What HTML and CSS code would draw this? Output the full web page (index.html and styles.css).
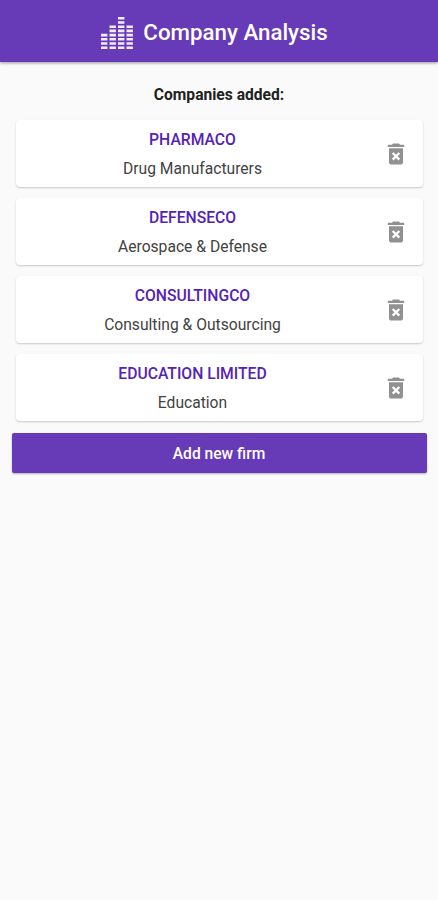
FILE: index.html
```html
<!DOCTYPE html>
<html lang="en">
<head>
  <meta charset="utf-8">
  <meta name="viewport" content="width=device-width, initial-scale=1">
  <title>Company Analysis</title>
  <link rel="stylesheet" href="styles.css">
</head>
<body>

  <!-- Shared icons -->
  <svg width="0" height="0" class="icon-defs">
    <symbol id="icon-delete" viewBox="0 0 24 24">
      <path fill-rule="evenodd" d="M6 19c0 1.1.9 2 2 2h8c1.1 0 2-.9 2-2V7H6v12zm2.46-7.12l1.41-1.41L12 12.59l2.12-2.12 1.41 1.41L13.41 14l2.12 2.12-1.41 1.41L12 15.41l-2.12 2.12-1.41-1.41L10.59 14l-2.13-2.12zM15.5 4l-1-1h-5l-1 1H5v2h14V4z"/>
    </symbol>
  </svg>

  <header class="toolbar">
    <svg class="logo" viewBox="0 0 32 33" aria-hidden="true">
      <path d="M3.2 33V17M11.7 33V8.4M20.2 33V0M28.7 33V8.4"/>
    </svg>
    <h1>Company Analysis</h1>
  </header>

  <main>
    <h2 class="list-title">Companies added:</h2>

    <div class="companies">
      <div class="card">
        <div class="info">
          <div class="name">PHARMACO</div>
          <div class="sector">Drug Manufacturers</div>
        </div>
        <button class="delete" aria-label="Delete"><svg><use href="#icon-delete"/></svg></button>
      </div>

      <div class="card">
        <div class="info">
          <div class="name">DEFENSECO</div>
          <div class="sector">Aerospace &amp; Defense</div>
        </div>
        <button class="delete" aria-label="Delete"><svg><use href="#icon-delete"/></svg></button>
      </div>

      <div class="card">
        <div class="info">
          <div class="name">CONSULTINGCO</div>
          <div class="sector">Consulting &amp; Outsourcing</div>
        </div>
        <button class="delete" aria-label="Delete"><svg><use href="#icon-delete"/></svg></button>
      </div>

      <div class="card">
        <div class="info">
          <div class="name">EDUCATION LIMITED</div>
          <div class="sector">Education</div>
        </div>
        <button class="delete" aria-label="Delete"><svg><use href="#icon-delete"/></svg></button>
      </div>
    </div>

    <button class="add">Add new firm</button>
  </main>

</body>
</html>
```
FILE: styles.css
```css
* { box-sizing: border-box; }

body {
  margin: 0;
  min-height: 100vh;
  background: #fafafa;
  color: #212121;
  font-family: Roboto, sans-serif;
}

button {
  border: none;
  font-family: inherit;
  cursor: pointer;
}

.icon-defs { display: block; }

.toolbar {
  display: flex;
  align-items: center;
  justify-content: center;
  gap: 10px;
  height: 62px;
  padding-right: 9px;
  background: #673ab7;
  color: #fff;
  box-shadow: 0 1px 3px rgba(0, 0, 0, 0.4);
}

.toolbar h1 {
  margin: 2px 0 0;
  font-size: 22.3px;
  font-weight: 500;
  line-height: 30px;
}

.logo {
  width: 32px;
  height: 33px;
  margin-top: 3px;
  fill: none;
  stroke: #f3edfb;
  stroke-width: 6.4;
  stroke-dasharray: 2.6 1.6;
}

main { padding: 23px 11px 0 12px; }

.list-title {
  margin: 0 1px 15px 0;
  font-size: 15.6px;
  font-weight: 700;
  line-height: 20px;
  text-align: center;
}

.companies {
  display: flex;
  flex-direction: column;
  gap: 11px;
  padding: 0 4px;
}

.card {
  display: flex;
  align-items: center;
  height: 67px;
  border-radius: 4px;
  background: #fff;
  box-shadow: 0 1px 2px rgba(0, 0, 0, 0.2);
}

.info {
  flex: 1;
  text-align: center;
}

.name {
  color: #5423b5;
  font-size: 15.7px;
  font-weight: 500;
  line-height: 29px;
}

.sector {
  color: #424242;
  font-size: 15.65px;
  line-height: 29px;
}

.delete {
  display: flex;
  justify-content: center;
  width: 54px;
  padding: 0;
  background: none;
}

.delete svg {
  width: 28px;
  height: 28px;
  fill: #919191;
}

.add {
  display: block;
  width: 100%;
  height: 40px;
  margin-top: 12px;
  padding: 1px 7px 0 6px;
  border-radius: 2px;
  background: #673ab7;
  color: #fff;
  font-size: 15.6px;
  font-weight: 500;
  box-shadow: 0 1px 2px rgba(0, 0, 0, 0.3);
}
```
